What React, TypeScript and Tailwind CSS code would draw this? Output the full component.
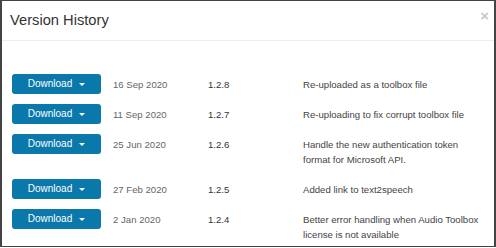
const versions = [
  { date: '16 Sep 2020', version: '1.2.8', notes: 'Re-uploaded as a toolbox file' },
  { date: '11 Sep 2020', version: '1.2.7', notes: 'Re-uploading to fix corrupt toolbox file' },
  {
    date: '25 Jun 2020',
    version: '1.2.6',
    notes: 'Handle the new authentication token format for Microsoft API.',
  },
  { date: '27 Feb 2020', version: '1.2.5', notes: 'Added link to text2speech' },
  {
    date: '2 Jan 2020',
    version: '1.2.4',
    notes: 'Better error handling when Audio Toolbox license is not available',
  },
]

function DownloadButton() {
  return (
    <button className="flex h-[20px] w-[89px] items-center justify-center gap-[7px] rounded-[3px] bg-[#0a78ab] text-[10px] leading-none text-white">
      <span>Download</span>
      <span className="h-0 w-0 border-x-[3px] border-t-[3px] border-x-transparent border-t-white" />
    </button>
  )
}

export default function App() {
  return (
    <div className="h-[248px] w-[496px] bg-white font-['Liberation_Sans',Arial,sans-serif]">
      <div className="flex h-[247px] flex-col border-x-2 border-y border-[#444]">
        <div className="flex h-[40px] shrink-0 items-start justify-between border-b border-[#eeeeee] pl-[8px] pr-[5px]">
          <h1 className="pt-[11px] text-[14.7px] leading-[17px] text-[#333]">Version History</h1>
          <span className="pt-[7px] text-[15px] font-bold leading-[15px] text-[#c8c8c8]">×</span>
        </div>
        <div className="pl-[10px] pt-[28px]">
          {versions.map((v) => (
            <div
              key={v.version}
              className="grid grid-cols-[101px_95px_95px_178px] items-start py-[5px] text-[9.6px] leading-[15px]"
            >
              <DownloadButton />
              <span className="pt-[3px] text-[#666]">{v.date}</span>
              <span className="pt-[3px] text-[#333]">{v.version}</span>
              <span className="pb-[2px] pt-[3px] text-[#444]">{v.notes}</span>
            </div>
          ))}
        </div>
      </div>
    </div>
  )
}
